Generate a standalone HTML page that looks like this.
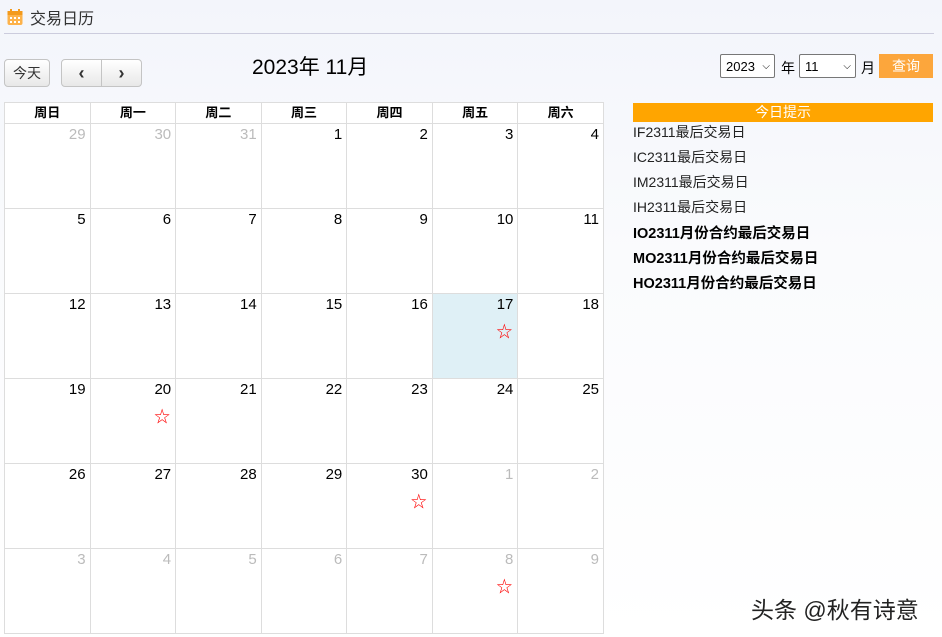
<!DOCTYPE html>
<html><head><meta charset="utf-8"><style>
body{margin:0;width:942px;height:637px;overflow:hidden;background:linear-gradient(180deg,#f3f5fb 0%,#fafbfd 40%,#fff 100%);font-family:"Liberation Sans","Noto Sans CJK SC",sans-serif;position:relative;color:#000}
.abs{position:absolute}
.title{left:30px;top:5px;font-size:16px;color:#333}
.hr{left:4px;right:8px;top:33px;height:1px;background:#ccd}
.btn{position:absolute;top:59px;height:28px;border:1px solid #c4c4c4;border-radius:4px;background:linear-gradient(#fff,#e8e8e8);box-sizing:border-box;font-size:14px;color:#333;text-align:center;line-height:26px}
table{position:absolute;left:4px;top:102px;width:600px;border-collapse:collapse;table-layout:fixed;background:#fff}
th{height:20px;border:1px solid #ddd;font-size:13px;font-weight:bold;padding:0;line-height:20px}
td{height:80px;border:1px solid #ddd;vertical-align:top;text-align:right;padding:2px 4px 0 0;font-size:15px;position:relative;box-sizing:content-box;line-height:18px}
tr.r td{height:82px}
td.g{color:#bbb}
td.t{background:#dff0f6}
.st{position:absolute;right:5px;top:30px;color:#f00;font-size:16px;line-height:18px}
.side div{position:absolute;left:633px;font-size:14px;color:#222}
.side b{font-size:14.5px;color:#000}
</style></head><body>
<svg class="abs" style="left:7px;top:9px" width="16" height="17" viewBox="0 0 16 17"><rect x="0.5" y="2" width="15" height="14" rx="2" fill="#fdb24a"/><rect x="0.5" y="2" width="15" height="4" fill="#f39a1c"/><g fill="#fff"><rect x="3" y="8" width="2" height="2"/><rect x="7" y="8" width="2" height="2"/><rect x="11" y="8" width="2" height="2"/><rect x="3" y="12" width="2" height="2"/><rect x="7" y="12" width="2" height="2"/><rect x="11" y="12" width="2" height="2"/></g><rect x="3" y="0" width="2" height="4" fill="#f39a1c"/><rect x="11" y="0" width="2" height="4" fill="#f39a1c"/></svg>
<div class="abs title">交易日历</div>
<div class="abs hr"></div>
<div class="btn" style="left:4px;width:46px">今天</div>
<div class="btn" style="left:61px;width:41px;border-radius:4px 0 0 4px;font-size:18px;font-weight:bold">‹</div>
<div class="btn" style="left:101px;width:41px;border-radius:0 4px 4px 0;font-size:18px;font-weight:bold">›</div>
<div class="abs" style="left:252px;top:51px;font-size:21px">2023年 11月</div>
<div class="abs" style="left:720px;top:54px;width:55px;height:24px;border:1px solid #777;border-radius:2px;background:#fff;font-size:13px;line-height:24px;padding-left:5px;box-sizing:border-box">2023 <span style="position:absolute;right:4px;font-size:10px">⌵</span></div>
<div class="abs" style="left:781px;top:58px;font-size:14px">年</div>
<div class="abs" style="left:799px;top:54px;width:57px;height:24px;border:1px solid #777;border-radius:2px;background:#fff;font-size:13px;line-height:24px;padding-left:5px;box-sizing:border-box">11<span style="position:absolute;right:4px;font-size:10px">⌵</span></div>
<div class="abs" style="left:861px;top:58px;font-size:14px">月</div>
<div class="abs" style="left:879px;top:54px;width:54px;height:24px;background:#fca63c;color:#fff;font-size:14px;text-align:center;line-height:24px">查询</div>
<table>
<tr><th>周日</th><th>周一</th><th>周二</th><th>周三</th><th>周四</th><th>周五</th><th>周六</th></tr>
<tr class="r"><td class="g">29</td><td class="g">30</td><td class="g">31</td><td>1</td><td>2</td><td>3</td><td>4</td></tr>
<tr class="r"><td>5</td><td>6</td><td>7</td><td>8</td><td>9</td><td>10</td><td>11</td></tr>
<tr class="r"><td>12</td><td>13</td><td>14</td><td>15</td><td>16</td><td class="t">17<span class="st">☆</span></td><td>18</td></tr>
<tr class="r"><td>19</td><td>20<span class="st">☆</span></td><td>21</td><td>22</td><td>23</td><td>24</td><td>25</td></tr>
<tr class="r"><td>26</td><td>27</td><td>28</td><td>29</td><td>30<span class="st">☆</span></td><td class="g">1</td><td class="g">2</td></tr>
<tr class="r"><td class="g">3</td><td class="g">4</td><td class="g">5</td><td class="g">6</td><td class="g">7</td><td class="g">8<span class="st">☆</span></td><td class="g">9</td></tr>
</table>
<div class="abs" style="left:633px;top:103px;width:300px;height:19px;background:#ffa500;color:#fff;font-size:14px;text-align:center;line-height:19px">今日提示</div>
<div class="side">
<div style="top:122px">IF2311最后交易日</div>
<div style="top:147px">IC2311最后交易日</div>
<div style="top:172px">IM2311最后交易日</div>
<div style="top:197px">IH2311最后交易日</div>
<div style="top:222px"><b>IO2311月份合约最后交易日</b></div>
<div style="top:247px"><b>MO2311月份合约最后交易日</b></div>
<div style="top:272px"><b>HO2311月份合约最后交易日</b></div>
</div>
<div class="abs" style="left:751px;top:591px;font-size:23px;color:#222">头条 @秋有诗意</div>
</body></html>
